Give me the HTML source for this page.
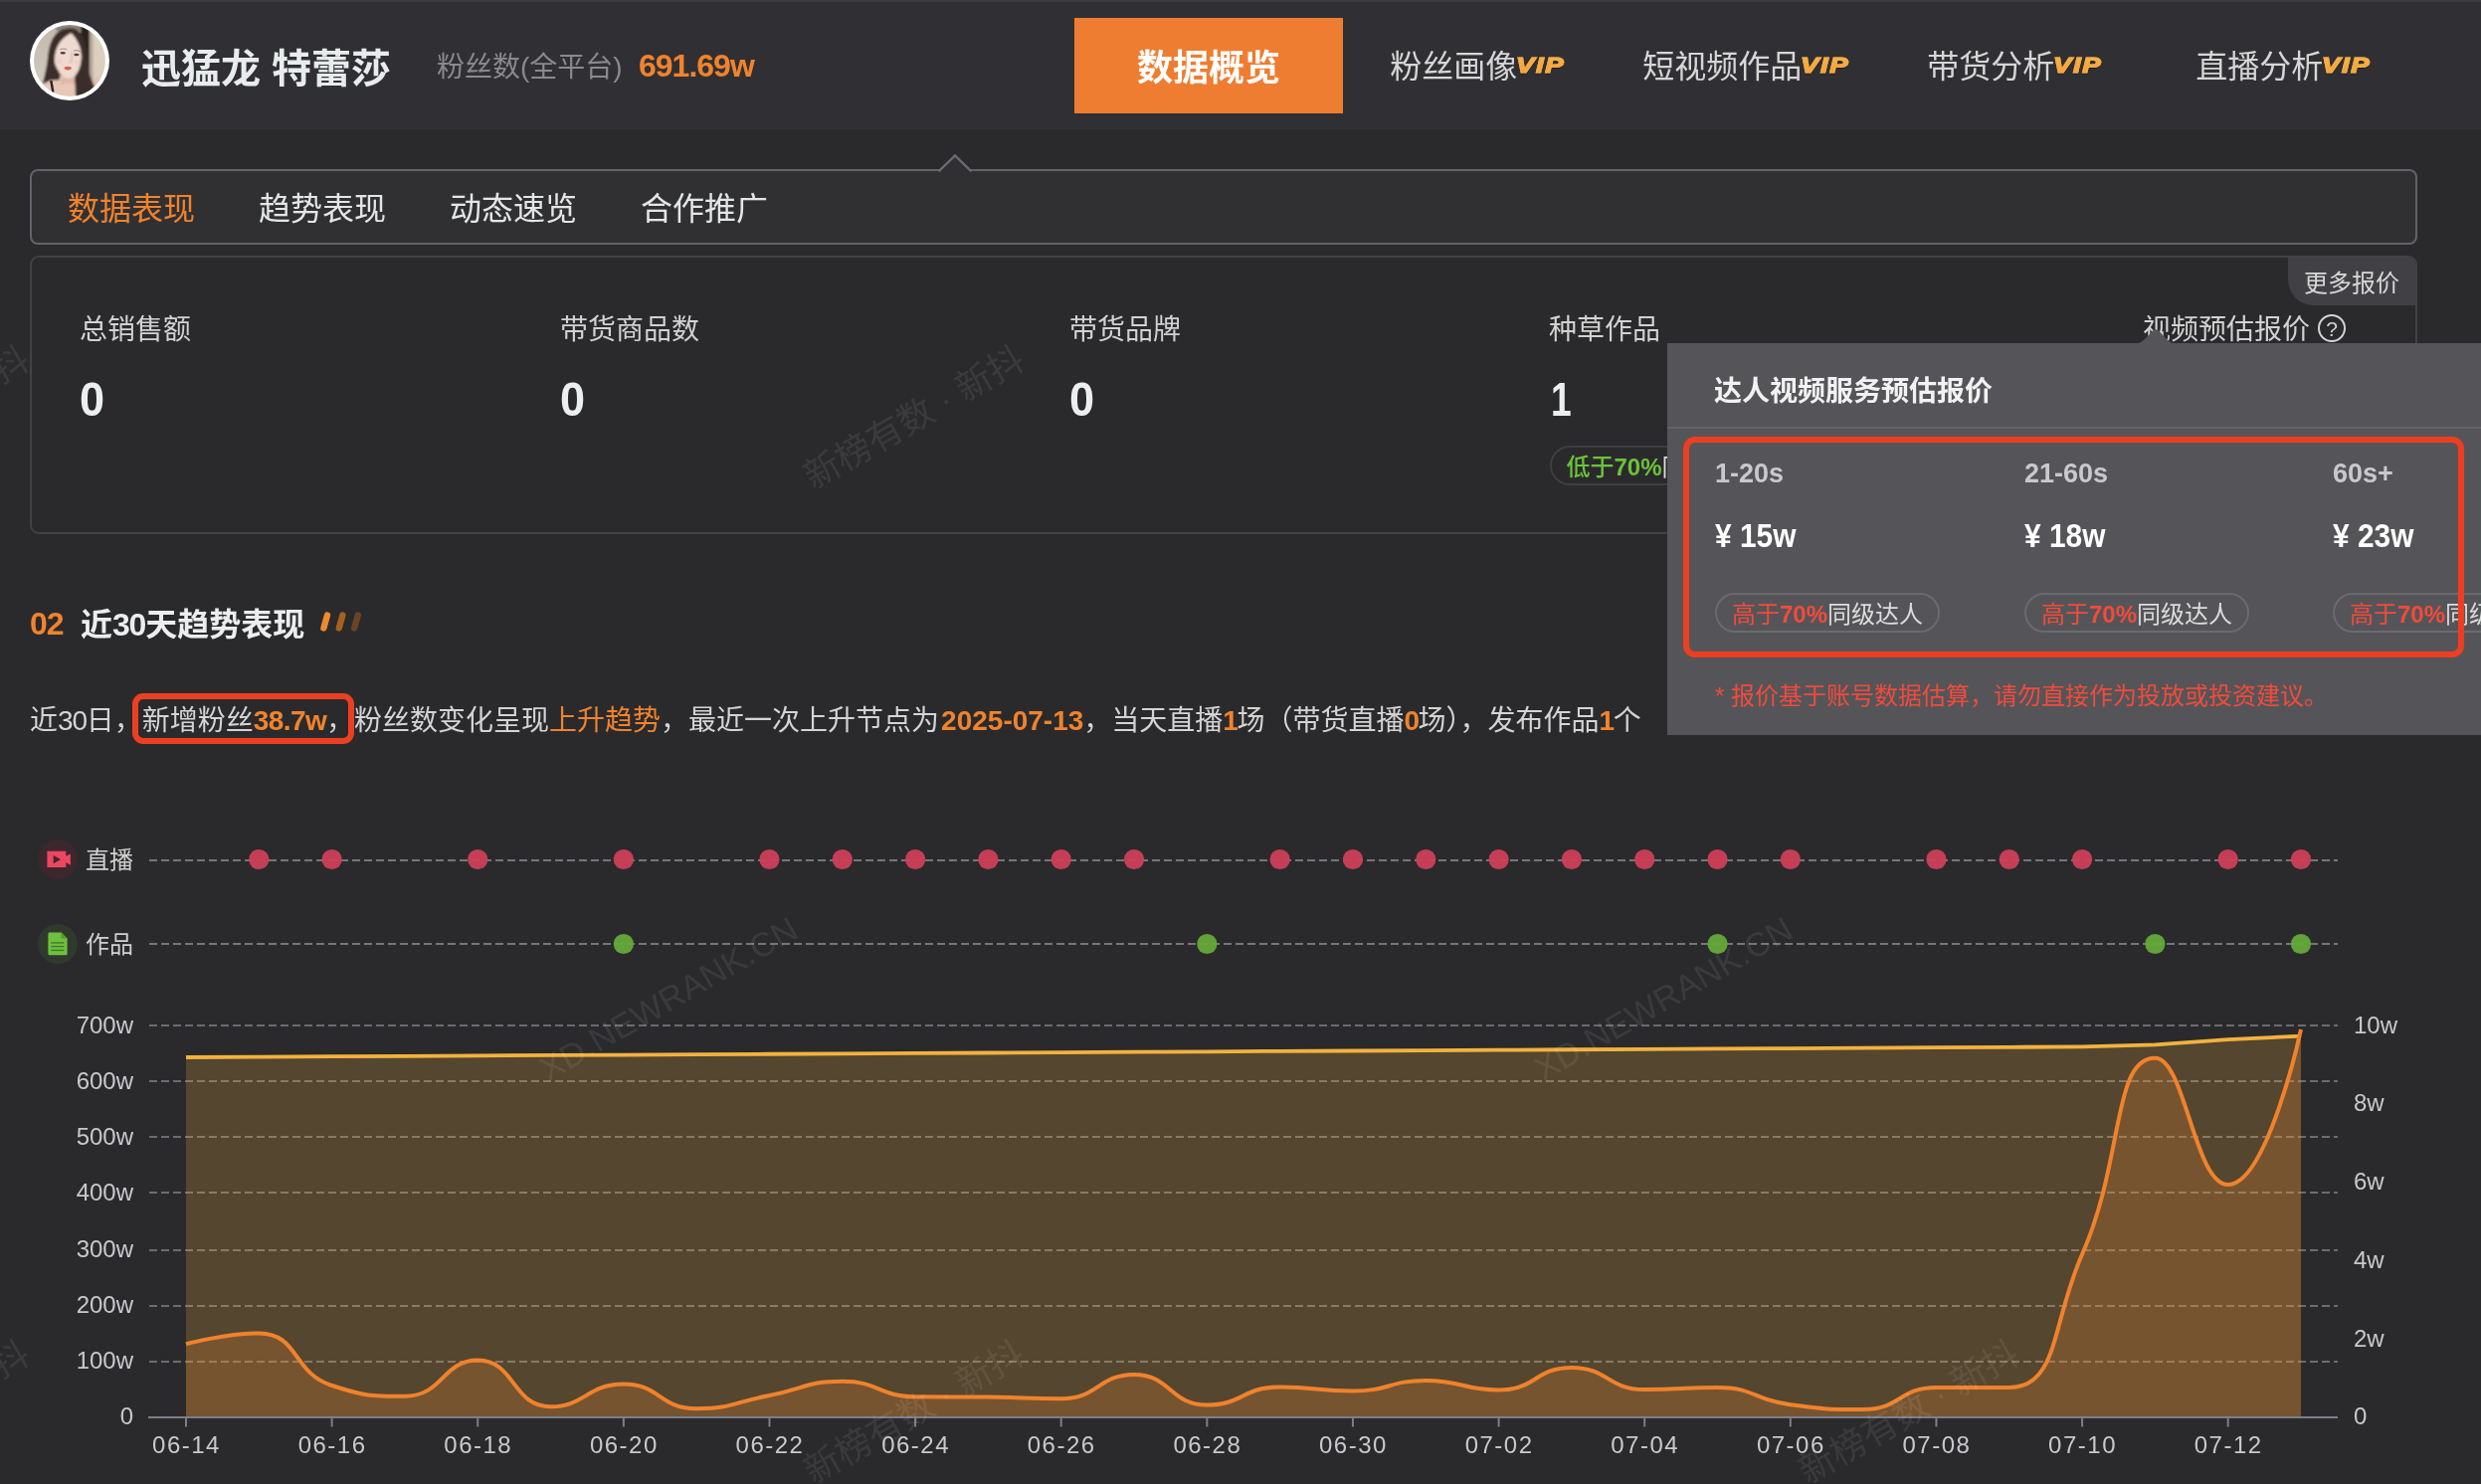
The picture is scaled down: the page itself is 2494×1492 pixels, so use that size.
<!DOCTYPE html>
<html lang="zh-CN">
<head>
<meta charset="utf-8">
<title>迅猛龙 特蕾莎 - 数据概览</title>
<style>
*{box-sizing:border-box;margin:0;padding:0}
html,body{width:2494px;height:1492px;overflow:hidden;background:#2a2a2c}
body{opacity:.9999}
body{position:relative;font-family:"Liberation Sans","Noto Sans CJK SC",sans-serif;color:#d8d8d8}
.abs{position:absolute;white-space:nowrap}
.num{font-family:"Liberation Sans","Noto Sans CJK SC",sans-serif;font-weight:700;letter-spacing:-.6px}
.or{color:#f0832d}
/* header */
#hdr{position:absolute;left:0;top:0;width:2494px;height:130px;background:#303034}
#hdr:before{content:"";position:absolute;left:0;top:0;width:100%;height:2px;background:#3a3a3f}
#avatar{position:absolute;left:30px;top:21px;width:80px;height:80px;border-radius:50%;background:#fff;overflow:hidden}
#avatar svg{position:absolute;left:4px;top:4px;width:72px;height:72px;border-radius:50%}
#name{left:142px;top:39px;height:60px;line-height:60px;font-size:40px;font-weight:700;color:#e8ecec}
#fanl{left:439px;top:46px;height:44px;line-height:44px;font-size:28px;color:#8a8a8c}
#fann{left:642px;top:44px;height:44px;line-height:44px;font-size:32px;color:#f0832d;font-weight:700;letter-spacing:-1px}
.nav{position:absolute;top:18px;width:270px;height:96px;line-height:98px;text-align:center;font-size:32px;color:#d6d6d6;white-space:nowrap}
.nav.on{background:#ee7d31;color:#fff;font-weight:700;font-size:36px;line-height:102px}
.vip{display:inline-block;font-family:"Liberation Sans",sans-serif;font-weight:700;font-style:italic;font-size:21.5px;line-height:24px;letter-spacing:1.3px;background:linear-gradient(180deg,#f8bb57 0%,#f3a840 50%,#f2a236 100%);-webkit-background-clip:text;background-clip:text;color:transparent;-webkit-text-stroke:1.2px #f4aa42;transform:scaleX(1.28);transform-origin:left center;vertical-align:5px;margin-left:-1px;margin-right:10px;filter:drop-shadow(0 1px 0.5px rgba(20,20,30,.55))}
/* tabs */
#tabs{position:absolute;left:30px;top:170px;width:2400px;height:76px;border:2px solid #62626a;border-radius:8px;background:#303033}
#caret{position:absolute;left:940px;top:152px;width:40px;height:22px}
.tab{position:absolute;top:187.5px;height:44px;line-height:44px;font-size:32px;color:#e4e6e6;white-space:nowrap}
/* stats */
#stats{position:absolute;left:30px;top:256.5px;width:2400px;height:280px;border:2px solid #424245;border-radius:9px}
.sl{position:absolute;top:310px;height:44px;line-height:44px;font-size:28px;color:#d2d2d2;white-space:nowrap}
.sv{position:absolute;top:373px;height:56px;line-height:56px;font-size:49px;font-weight:700;color:#eceff0;white-space:nowrap;transform:scaleX(.92);transform-origin:left center}
#more{position:absolute;left:2300px;top:258.5px;width:128px;height:48px;line-height:52px;background:#414145;border-radius:0 7px 0 26px;font-size:24px;color:#d8d8d8;text-align:center;padding-left:0px}
.pill{position:absolute;height:40px;line-height:40px;border:2px solid #6a6a6f;border-radius:20px;font-size:24px;padding:0 15px;white-space:nowrap;color:#dcdcdc}
.pill b{font-weight:700}
.red{color:#f24b3b}
/* popup */
#pop{position:absolute;left:1676px;top:345px;width:900px;height:394px;background:#555559}
#popc{position:absolute;left:2145.5px;top:330px;width:42px;height:16px}
#poph{position:absolute;left:0;top:0;width:100%;height:86px;border-bottom:2px solid #646468}
#popt{left:1723px;top:372px;height:44px;line-height:44px;font-size:28px;font-weight:700;color:#f2f2f2}
.pc1{position:absolute;top:454px;height:44px;line-height:44px;font-size:27px;font-weight:700;color:#c9c9cb;white-space:nowrap}
.pc2{position:absolute;top:514px;height:50px;line-height:50px;font-size:33px;font-weight:700;color:#fff;white-space:nowrap;transform:scaleX(.905);transform-origin:left center}
#redbox{position:absolute;left:1692px;top:439px;width:785px;height:222px;border:6px solid #ec3f22;border-radius:12px}
#note{left:1724px;top:678px;height:44px;line-height:44px;font-size:24px;color:#f24b3b}
/* section */
#sec02{left:30px;top:605px;height:44px;line-height:44px;font-size:32px;font-weight:700;color:#f0832d;letter-spacing:-1px}
#sect{left:81px;top:605.5px;height:44px;line-height:44px;font-size:32px;font-weight:700;color:#eceeee}
#desc{left:30px;top:703px;height:44px;line-height:44px;font-size:28px;color:#d4d4d4}
#redbox2{position:absolute;left:132.5px;top:697px;width:223.5px;height:51px;border:6px solid #ec3f22;border-radius:11px}
.tl{position:absolute;height:40px;line-height:40px;font-size:24px;color:#d0d0d0;left:86px;white-space:nowrap}
.chart{position:absolute;left:0;top:0}
.wm{position:absolute;white-space:nowrap;font-size:36px;line-height:40px;color:rgba(255,255,255,.08);transform:translate(-50%,-50%) rotate(-30deg);transform-origin:center center;letter-spacing:0}
.wm.en{font-size:34px;letter-spacing:.3px}
</style>
</head>
<body>
<div id="hdr"></div>
<div id="avatar">
<svg viewBox="0 0 72 72">
<defs><filter id="avb" x="-5%" y="-5%" width="110%" height="110%"><feGaussianBlur stdDeviation="0.8"/></filter>
<linearGradient id="avbg" x1="0" y1="0" x2="0" y2="1"><stop offset="0" stop-color="#c2b9ae"/><stop offset="1" stop-color="#d6cdc2"/></linearGradient></defs>
<g filter="url(#avb)">
<rect x="-2" y="-2" width="76" height="76" fill="url(#avbg)"/>
<rect x="22" y="-2" width="34" height="8" fill="#8e857d"/>
<rect x="59" y="-2" width="15" height="76" fill="#dccfbd"/>
<rect x="47" y="0" width="9.5" height="56" fill="#2a201d"/>
<rect x="56" y="5" width="3.6" height="50" fill="#b5a99b"/>
<path d="M37 3.2 C30 3.4 25 5.5 21.5 10 C17 16 15.5 22 14.6 28 C13.8 34 13.4 40 11.4 48 C10.6 52 9.8 56 8.6 59.5 L16 62 L30 40 L45 40 L41 53 L41.8 74 L58 74 C62 68 62 64 60.5 60 C58.5 56 56.5 52 55.6 47 C54.4 40 53.6 33 52.6 26 C51.6 18 50.6 12 46 7 C43 4 40 3.2 37 3.2 Z" fill="#3b2d29"/>
<path d="M8.6 59.5 C12 58 15 56.6 17.2 55.4 L26.5 55 L29 50 L41 50 L41.8 74 L-2 74 L-2 64 Z" fill="#e8c8b7"/>
<path d="M59.5 57.5 C60 54 62 52.5 66 52.6 L74 54 L74 74 L62 74 C62.6 68 61.6 62 59.5 57.5 Z" fill="#e4c1af"/>
<path d="M36.6 8.6 C33 11 28 14.5 25.6 18.5 C23 22.5 21.8 26 21.2 30 C20.6 34 20.4 36.5 21.2 39 C22.2 42.5 24 45.6 26.6 48.6 C29 51.4 31.6 53.6 34.4 54.2 C36.6 54.4 38.6 53.6 40.4 52.2 C43 50 45 46.6 46.4 42 C47.6 38 48.2 33.6 47.8 29.6 C47.4 25.6 46.6 22.4 45 19 C43 14.6 40.4 11 38 8.6 Z" fill="#efdad1"/>
<path d="M29 52 C31 54 36 55 40.6 52 L41.4 60 C37 58 32 58.6 26.4 60.4 Z" fill="#dcb7a6"/>
<path d="M36.8 8.4 C32 10 27 14 24.6 19 C22.6 23 21.6 27 21 31 C20.6 35 20.6 38 21.6 41 C22.6 44 24.4 47 27 50 L25.4 55.4 L16 55.6 L13 57 C13 50 13.6 44 14 38 C14.6 30 15 22 19 14 C23 7 30 4 37 4 Z" fill="#3b2d29"/>
<path d="M38 8.4 C41 11 43.6 15 45.4 19.4 C47 23.4 47.8 27 48 31 C48.2 35 47.6 39 46.4 42.6 C45 47 43 50.4 41 52.4 L41.6 58 L46 66 L56 56 L55 40 L53 24 L49 12 L43 6 Z" fill="#3b2d29"/>
<path d="M38.2 27 C38.8 31 38.4 34.4 37.4 37.4 L35.4 37.8" stroke="#cfa697" stroke-width="1.1" fill="none"/>
<ellipse cx="25.6" cy="36.5" rx="3" ry="2" fill="#eec4bd" opacity=".7"/>
<ellipse cx="43.6" cy="38" rx="2.6" ry="2" fill="#eec4bd" opacity=".7"/>
</g>
<g opacity=".92">
<path d="M26.2 24.8 C28.4 23.8 31 23.8 33.2 24.8" stroke="#8d6f68" stroke-width="0.9" fill="none"/>
<path d="M40.2 26 C42.4 25.2 44.6 25.6 46.6 26.8" stroke="#8d6f68" stroke-width="0.9" fill="none"/>
<ellipse cx="29.2" cy="28.3" rx="2.7" ry="1.3" fill="#43303a"/>
<ellipse cx="42.9" cy="30" rx="2.6" ry="1.3" fill="#43303a"/>
<ellipse cx="34.2" cy="43.6" rx="3.7" ry="1.8" fill="#cf5a50"/>
<path d="M17.3 56 L19.3 67.6" stroke="#1e1a1a" stroke-width="2.5" fill="none"/>
</g>
</svg>
</div>
<div id="name" class="abs">迅猛龙 特蕾莎</div>
<div id="fanl" class="abs">粉丝数(全平台)</div>
<div id="fann" class="abs">691.69w</div>

<div class="nav on" style="left:1080px">数据概览</div>
<div class="nav" style="left:1350px">粉丝画像<span class="vip">VIP</span></div>
<div class="nav" style="left:1620px">短视频作品<span class="vip">VIP</span></div>
<div class="nav" style="left:1890px">带货分析<span class="vip">VIP</span></div>
<div class="nav" style="left:2160px">直播分析<span class="vip">VIP</span></div>

<div id="tabs"></div>
<svg id="caret" viewBox="0 0 40 22"><path d="M4.6 22 L4.6 17 L35.4 17 L35.4 22 Z" fill="#303033"/><path d="M3.5 20.4 L20 4.4 L36.5 20.4 Z" fill="#303033"/><path d="M3.5 20.4 L20 4.4 L36.5 20.4" fill="none" stroke="#696a72" stroke-width="2.2"/></svg>
<div class="tab or" style="left:68px;color:#f0832d">数据表现</div>
<div class="tab" style="left:260px">趋势表现</div>
<div class="tab" style="left:452px">动态速览</div>
<div class="tab" style="left:644px">合作推广</div>

<div id="stats"></div>
<div class="sl" style="left:80px">总销售额</div><div class="sv" style="left:80px">0</div>
<div class="sl" style="left:563px">带货商品数</div><div class="sv" style="left:563px">0</div>
<div class="sl" style="left:1075px">带货品牌</div><div class="sv" style="left:1075px">0</div>
<div class="sl" style="left:1557px">种草作品</div><div class="sv" style="left:1558.5px;transform:scaleX(.76);transform-origin:left center">1</div>
<div class="pill" style="left:1557.5px;top:447.5px;border-color:#3e3e43"><b style="color:#6cc23a;font-weight:500">低于<b style="font-weight:700">70%</b></b>同级达人</div>
<div class="sl" style="left:2154px">视频预估报价</div>
<svg class="abs" style="left:2329px;top:315px" width="30" height="30" viewBox="0 0 30 30"><circle cx="15" cy="15" r="13" fill="none" stroke="#d2d2d2" stroke-width="2"/><text x="15" y="22.5" text-anchor="middle" font-family="Liberation Sans, sans-serif" font-size="21" fill="#d2d2d2">?</text></svg>
<div id="more">更多报价</div>


<div class="wm" style="left:918.7px;top:420px">新榜有数 · 新抖</div>
<div class="wm" style="left:-81.3px;top:420px">新榜有数 · 新抖</div>
<!-- popup -->
<div id="pop"><div id="poph"></div></div>
<svg id="popc" viewBox="0 0 42 16"><path d="M0 16 C7 15.5 11 10 17.5 3 Q21 -0.6 24.5 3 C31 10 35 15.5 42 16 Z" fill="#555559"/></svg>
<div id="popt" class="abs">达人视频服务预估报价</div>
<div class="pc1" style="left:1724px">1-20s</div>
<div class="pc1" style="left:2035px">21-60s</div>
<div class="pc1" style="left:2345px">60s+</div>
<div class="pc2" style="left:1724px">¥ 15w</div>
<div class="pc2" style="left:2035px">¥ 18w</div>
<div class="pc2" style="left:2345px">¥ 23w</div>
<div class="pill" style="left:1724px;top:595.5px"><span class="red">高于<b>70%</b></span>同级达人</div>
<div class="pill" style="left:2035px;top:595.5px"><span class="red">高于<b>70%</b></span>同级达人</div>
<div class="pill" style="left:2345px;top:595.5px"><span class="red">高于<b>70%</b></span>同级达人</div>
<div id="redbox"></div>
<div id="note" class="abs">* 报价基于账号数据估算，请勿直接作为投放或投资建议。</div>

<!-- section 02 -->
<div id="sec02" class="abs">02</div>
<div id="sect" class="abs">近<span style="letter-spacing:-1.2px">30</span>天趋势表现</div>
<svg class="abs" style="left:318px;top:612px" width="52" height="26" viewBox="0 0 52 26">
<g stroke-width="6.4" stroke-linecap="round" fill="none"><path d="M11 6.5 L7.4 19.5" stroke="#ee8a2f"/><path d="M26.4 6.5 L22.8 19.5" stroke="#a5601f"/><path d="M41.8 6.5 L38.2 19.5" stroke="#694526"/></g></svg>
<div id="desc" class="abs">近<span style="letter-spacing:-1.2px">30</span>日，新增粉丝<span class="or num">38.7w</span>，粉丝数变化呈现<span class="or">上升趋势</span>，最近一次上升节点为<span class="or num" style="letter-spacing:0;margin-left:2px">2025-07-13</span>，当天直播<span class="or num" style="letter-spacing:-1.5px">1</span>场（带货直播<span class="or num" style="letter-spacing:-1.5px">0</span>场），发布作品<span class="or num" style="letter-spacing:-1.5px">1</span>个</div>
<div id="redbox2"></div>

<!-- timeline labels/icons -->
<svg class="abs" style="left:38px;top:844px" width="40" height="40" viewBox="0 0 40 40"><circle cx="20" cy="20" r="20" fill="#3c272d"/><path d="M9.4 11.7 H28.3 V16.8 L32.9 14.4 V25.8 L28.3 23.3 V28.1 H9.4 Z" fill="#ee4560"/><path d="M15.7 16 L23 20.1 L15.7 24.2 Z" fill="#3c272d"/></svg>
<div class="tl" style="top:845px">直播</div>
<svg class="abs" style="left:38px;top:929px" width="40" height="40" viewBox="0 0 40 40"><circle cx="20" cy="20" r="20" fill="#2f3a2c"/><path d="M11.9 8.6 H23.6 L29.6 14.6 V30 Q29.6 31.3 28.3 31.3 H11.9 Q10.4 31.3 10.4 30 V10 Q10.4 8.6 11.9 8.6 Z" fill="#6fc040"/><path d="M23.6 8.6 L29.6 14.6 H23.6 Z" fill="#4f9a2c"/><g stroke="#3f7a28" stroke-width="1.4"><path d="M13.3 18.9 H26.4"/><path d="M13.3 22.6 H26.4"/><path d="M13.3 26.4 H26.4"/></g></svg>
<div class="tl" style="top:930px">作品</div>

<svg class="chart" width="2494" height="1492" viewBox="0 0 2494 1492">
<line x1="150" x2="2350" y1="865.0" y2="865.0" stroke="#75757b" stroke-width="2" stroke-dasharray="8 4"/>
<line x1="150" x2="2350" y1="949.0" y2="949.0" stroke="#75757b" stroke-width="2" stroke-dasharray="8 4"/>
<circle cx="260.31" cy="864" r="10.1" fill="#cc3f57" fill-opacity="0.96"/>
<circle cx="333.62" cy="864" r="10.1" fill="#cc3f57" fill-opacity="0.96"/>
<circle cx="480.24" cy="864" r="10.1" fill="#cc3f57" fill-opacity="0.96"/>
<circle cx="626.86" cy="864" r="10.1" fill="#cc3f57" fill-opacity="0.96"/>
<circle cx="773.48" cy="864" r="10.1" fill="#cc3f57" fill-opacity="0.96"/>
<circle cx="846.79" cy="864" r="10.1" fill="#cc3f57" fill-opacity="0.96"/>
<circle cx="920.10" cy="864" r="10.1" fill="#cc3f57" fill-opacity="0.96"/>
<circle cx="993.41" cy="864" r="10.1" fill="#cc3f57" fill-opacity="0.96"/>
<circle cx="1066.72" cy="864" r="10.1" fill="#cc3f57" fill-opacity="0.96"/>
<circle cx="1140.03" cy="864" r="10.1" fill="#cc3f57" fill-opacity="0.96"/>
<circle cx="1286.65" cy="864" r="10.1" fill="#cc3f57" fill-opacity="0.96"/>
<circle cx="1359.96" cy="864" r="10.1" fill="#cc3f57" fill-opacity="0.96"/>
<circle cx="1433.28" cy="864" r="10.1" fill="#cc3f57" fill-opacity="0.96"/>
<circle cx="1506.59" cy="864" r="10.1" fill="#cc3f57" fill-opacity="0.96"/>
<circle cx="1579.90" cy="864" r="10.1" fill="#cc3f57" fill-opacity="0.96"/>
<circle cx="1653.21" cy="864" r="10.1" fill="#cc3f57" fill-opacity="0.96"/>
<circle cx="1726.52" cy="864" r="10.1" fill="#cc3f57" fill-opacity="0.96"/>
<circle cx="1799.83" cy="864" r="10.1" fill="#cc3f57" fill-opacity="0.96"/>
<circle cx="1946.45" cy="864" r="10.1" fill="#cc3f57" fill-opacity="0.96"/>
<circle cx="2019.76" cy="864" r="10.1" fill="#cc3f57" fill-opacity="0.96"/>
<circle cx="2093.07" cy="864" r="10.1" fill="#cc3f57" fill-opacity="0.96"/>
<circle cx="2239.69" cy="864" r="10.1" fill="#cc3f57" fill-opacity="0.96"/>
<circle cx="2313.00" cy="864" r="10.1" fill="#cc3f57" fill-opacity="0.96"/>
<circle cx="626.86" cy="949" r="10.1" fill="#64a83a" fill-opacity="0.96"/>
<circle cx="1213.34" cy="949" r="10.1" fill="#64a83a" fill-opacity="0.96"/>
<circle cx="1726.52" cy="949" r="10.1" fill="#64a83a" fill-opacity="0.96"/>
<circle cx="2166.38" cy="949" r="10.1" fill="#64a83a" fill-opacity="0.96"/>
<circle cx="2313.00" cy="949" r="10.1" fill="#64a83a" fill-opacity="0.96"/>
<line x1="150" x2="2350" y1="1369.00" y2="1369.00" stroke="#6b6b71" stroke-width="2" stroke-dasharray="8 4"/>
<line x1="150" x2="2350" y1="1313.00" y2="1313.00" stroke="#6b6b71" stroke-width="2" stroke-dasharray="8 4"/>
<line x1="150" x2="2350" y1="1257.00" y2="1257.00" stroke="#6b6b71" stroke-width="2" stroke-dasharray="8 4"/>
<line x1="150" x2="2350" y1="1199.00" y2="1199.00" stroke="#6b6b71" stroke-width="2" stroke-dasharray="8 4"/>
<line x1="150" x2="2350" y1="1143.00" y2="1143.00" stroke="#6b6b71" stroke-width="2" stroke-dasharray="8 4"/>
<line x1="150" x2="2350" y1="1087.00" y2="1087.00" stroke="#6b6b71" stroke-width="2" stroke-dasharray="8 4"/>
<line x1="150" x2="2350" y1="1031.00" y2="1031.00" stroke="#6b6b71" stroke-width="2" stroke-dasharray="8 4"/>
<path d="M187.00 1063.00 L260.31 1062.59 L333.62 1062.18 L406.93 1061.78 L480.24 1061.37 L553.55 1060.96 L626.86 1060.55 L700.17 1060.15 L773.48 1059.74 L846.79 1059.33 L920.10 1058.92 L993.41 1058.52 L1066.72 1058.11 L1140.03 1057.70 L1213.34 1057.29 L1286.65 1056.88 L1359.96 1056.48 L1433.28 1056.07 L1506.59 1055.66 L1579.90 1055.25 L1653.21 1054.85 L1726.52 1054.44 L1799.83 1054.03 L1873.14 1053.62 L1946.45 1053.22 L2019.76 1052.81 L2093.07 1052.40 L2166.38 1050.40 L2239.69 1045.20 L2313.00 1041.60 L2313.00 1425.00 L187.00 1425.00 Z" fill="#f2b23e" fill-opacity="0.215"/>
<path d="M187.00 1351.25 C187.00 1351.25 227.24 1340.50 260.31 1340.50 C300.55 1340.50 293.38 1379.92 333.62 1393.00 C366.69 1403.75 372.08 1403.75 406.93 1403.75 C445.39 1403.75 444.71 1367.50 480.24 1367.50 C518.02 1367.50 514.61 1414.25 553.55 1414.25 C587.93 1414.25 590.35 1391.50 626.86 1391.50 C663.66 1391.50 662.82 1416.25 700.17 1416.25 C736.13 1416.25 736.87 1409.87 773.48 1403.00 C810.18 1396.12 810.20 1388.75 846.79 1388.75 C883.51 1388.75 883.05 1403.99 920.10 1404.25 C956.36 1404.50 956.76 1404.25 993.41 1404.50 C1030.07 1404.75 1031.01 1406.25 1066.72 1406.25 C1104.32 1406.25 1103.89 1382.00 1140.03 1382.00 C1177.20 1382.00 1175.77 1412.50 1213.34 1412.50 C1249.08 1412.50 1249.49 1394.40 1286.65 1394.40 C1322.80 1394.40 1323.47 1398.50 1359.96 1398.50 C1396.78 1398.50 1396.59 1388.00 1433.28 1388.00 C1469.90 1388.00 1470.60 1397.50 1506.59 1397.50 C1543.91 1397.50 1543.21 1375.00 1579.90 1375.00 C1616.52 1375.00 1615.77 1397.00 1653.21 1397.00 C1689.08 1397.00 1690.35 1395.00 1726.52 1395.00 C1763.66 1395.00 1762.71 1407.48 1799.83 1412.30 C1836.02 1417.00 1837.23 1417.00 1873.14 1417.00 C1910.54 1417.00 1909.00 1395.00 1946.45 1395.00 C1982.31 1395.00 1995.98 1395.00 2019.76 1395.00 C2069.29 1395.00 2062.24 1330.66 2093.07 1261.00 C2135.55 1165.03 2123.20 1063.75 2166.38 1063.75 C2196.51 1063.75 2205.96 1191.00 2239.69 1191.00 C2279.27 1191.00 2313.00 1035.00 2313.00 1035.00 L2313.00 1425.00 L187.00 1425.00 Z" fill="#ef8434" fill-opacity="0.23"/>
<line x1="149" x2="2350" y1="1425.00" y2="1425.00" stroke="#7b7e8b" stroke-width="2"/>
<line x1="187.00" x2="187.00" y1="1425.00" y2="1434.50" stroke="#7b7e8b" stroke-width="2"/>
<line x1="333.62" x2="333.62" y1="1425.00" y2="1434.50" stroke="#7b7e8b" stroke-width="2"/>
<line x1="480.24" x2="480.24" y1="1425.00" y2="1434.50" stroke="#7b7e8b" stroke-width="2"/>
<line x1="626.86" x2="626.86" y1="1425.00" y2="1434.50" stroke="#7b7e8b" stroke-width="2"/>
<line x1="773.48" x2="773.48" y1="1425.00" y2="1434.50" stroke="#7b7e8b" stroke-width="2"/>
<line x1="920.10" x2="920.10" y1="1425.00" y2="1434.50" stroke="#7b7e8b" stroke-width="2"/>
<line x1="1066.72" x2="1066.72" y1="1425.00" y2="1434.50" stroke="#7b7e8b" stroke-width="2"/>
<line x1="1213.34" x2="1213.34" y1="1425.00" y2="1434.50" stroke="#7b7e8b" stroke-width="2"/>
<line x1="1359.96" x2="1359.96" y1="1425.00" y2="1434.50" stroke="#7b7e8b" stroke-width="2"/>
<line x1="1506.59" x2="1506.59" y1="1425.00" y2="1434.50" stroke="#7b7e8b" stroke-width="2"/>
<line x1="1653.21" x2="1653.21" y1="1425.00" y2="1434.50" stroke="#7b7e8b" stroke-width="2"/>
<line x1="1799.83" x2="1799.83" y1="1425.00" y2="1434.50" stroke="#7b7e8b" stroke-width="2"/>
<line x1="1946.45" x2="1946.45" y1="1425.00" y2="1434.50" stroke="#7b7e8b" stroke-width="2"/>
<line x1="2093.07" x2="2093.07" y1="1425.00" y2="1434.50" stroke="#7b7e8b" stroke-width="2"/>
<line x1="2239.69" x2="2239.69" y1="1425.00" y2="1434.50" stroke="#7b7e8b" stroke-width="2"/>
<path d="M187.00 1063.00 L260.31 1062.59 L333.62 1062.18 L406.93 1061.78 L480.24 1061.37 L553.55 1060.96 L626.86 1060.55 L700.17 1060.15 L773.48 1059.74 L846.79 1059.33 L920.10 1058.92 L993.41 1058.52 L1066.72 1058.11 L1140.03 1057.70 L1213.34 1057.29 L1286.65 1056.88 L1359.96 1056.48 L1433.28 1056.07 L1506.59 1055.66 L1579.90 1055.25 L1653.21 1054.85 L1726.52 1054.44 L1799.83 1054.03 L1873.14 1053.62 L1946.45 1053.22 L2019.76 1052.81 L2093.07 1052.40 L2166.38 1050.40 L2239.69 1045.20 L2313.00 1041.60" fill="none" stroke="#f2b23e" stroke-width="3.8" stroke-linejoin="round"/>
<path d="M187.00 1351.25 C187.00 1351.25 227.24 1340.50 260.31 1340.50 C300.55 1340.50 293.38 1379.92 333.62 1393.00 C366.69 1403.75 372.08 1403.75 406.93 1403.75 C445.39 1403.75 444.71 1367.50 480.24 1367.50 C518.02 1367.50 514.61 1414.25 553.55 1414.25 C587.93 1414.25 590.35 1391.50 626.86 1391.50 C663.66 1391.50 662.82 1416.25 700.17 1416.25 C736.13 1416.25 736.87 1409.87 773.48 1403.00 C810.18 1396.12 810.20 1388.75 846.79 1388.75 C883.51 1388.75 883.05 1403.99 920.10 1404.25 C956.36 1404.50 956.76 1404.25 993.41 1404.50 C1030.07 1404.75 1031.01 1406.25 1066.72 1406.25 C1104.32 1406.25 1103.89 1382.00 1140.03 1382.00 C1177.20 1382.00 1175.77 1412.50 1213.34 1412.50 C1249.08 1412.50 1249.49 1394.40 1286.65 1394.40 C1322.80 1394.40 1323.47 1398.50 1359.96 1398.50 C1396.78 1398.50 1396.59 1388.00 1433.28 1388.00 C1469.90 1388.00 1470.60 1397.50 1506.59 1397.50 C1543.91 1397.50 1543.21 1375.00 1579.90 1375.00 C1616.52 1375.00 1615.77 1397.00 1653.21 1397.00 C1689.08 1397.00 1690.35 1395.00 1726.52 1395.00 C1763.66 1395.00 1762.71 1407.48 1799.83 1412.30 C1836.02 1417.00 1837.23 1417.00 1873.14 1417.00 C1910.54 1417.00 1909.00 1395.00 1946.45 1395.00 C1982.31 1395.00 1995.98 1395.00 2019.76 1395.00 C2069.29 1395.00 2062.24 1330.66 2093.07 1261.00 C2135.55 1165.03 2123.20 1063.75 2166.38 1063.75 C2196.51 1063.75 2205.96 1191.00 2239.69 1191.00 C2279.27 1191.00 2313.00 1035.00 2313.00 1035.00" fill="none" stroke="#f0822c" stroke-width="4" stroke-linejoin="round"/>
<g font-family="Liberation Sans, sans-serif" font-size="24" fill="#c9c9cd">
<text x="134" y="1432.20" text-anchor="end">0</text>
<text x="134" y="1376.00" text-anchor="end">100w</text>
<text x="134" y="1319.80" text-anchor="end">200w</text>
<text x="134" y="1263.60" text-anchor="end">300w</text>
<text x="134" y="1207.40" text-anchor="end">400w</text>
<text x="134" y="1151.20" text-anchor="end">500w</text>
<text x="134" y="1095.00" text-anchor="end">600w</text>
<text x="134" y="1038.80" text-anchor="end">700w</text>
<text x="2366" y="1432.20">0</text>
<text x="2366" y="1353.50">2w</text>
<text x="2366" y="1274.80">4w</text>
<text x="2366" y="1196.10">6w</text>
<text x="2366" y="1117.40">8w</text>
<text x="2366" y="1038.70">10w</text>
<text x="187.50" y="1461" text-anchor="middle" letter-spacing="1.5">06-14</text>
<text x="334.12" y="1461" text-anchor="middle" letter-spacing="1.5">06-16</text>
<text x="480.74" y="1461" text-anchor="middle" letter-spacing="1.5">06-18</text>
<text x="627.36" y="1461" text-anchor="middle" letter-spacing="1.5">06-20</text>
<text x="773.98" y="1461" text-anchor="middle" letter-spacing="1.5">06-22</text>
<text x="920.60" y="1461" text-anchor="middle" letter-spacing="1.5">06-24</text>
<text x="1067.22" y="1461" text-anchor="middle" letter-spacing="1.5">06-26</text>
<text x="1213.84" y="1461" text-anchor="middle" letter-spacing="1.5">06-28</text>
<text x="1360.46" y="1461" text-anchor="middle" letter-spacing="1.5">06-30</text>
<text x="1507.09" y="1461" text-anchor="middle" letter-spacing="1.5">07-02</text>
<text x="1653.71" y="1461" text-anchor="middle" letter-spacing="1.5">07-04</text>
<text x="1800.33" y="1461" text-anchor="middle" letter-spacing="1.5">07-06</text>
<text x="1946.95" y="1461" text-anchor="middle" letter-spacing="1.5">07-08</text>
<text x="2093.57" y="1461" text-anchor="middle" letter-spacing="1.5">07-10</text>
<text x="2240.19" y="1461" text-anchor="middle" letter-spacing="1.5">07-12</text>
</g>
</svg>

<div class="wm en" style="left:671.7px;top:1003.7px">XD.NEWRANK.CN</div>
<div class="wm en" style="left:1671.7px;top:1003.7px">XD.NEWRANK.CN</div>
<div class="wm" style="left:918.7px;top:1420px">新榜有数 · 新抖</div>
<div class="wm" style="left:1918.7px;top:1420px">新榜有数 · 新抖</div>
<div class="wm" style="left:-81.3px;top:1420px">新榜有数 · 新抖</div>
</body>
</html>
